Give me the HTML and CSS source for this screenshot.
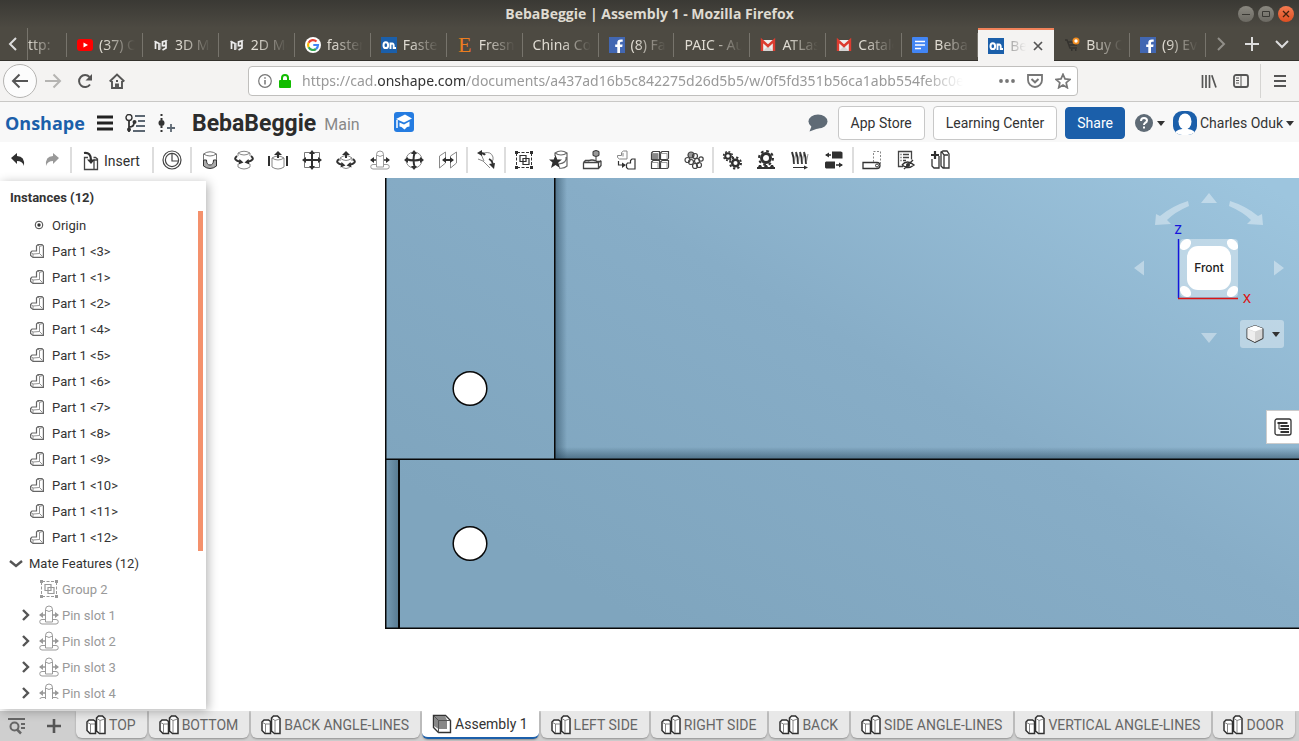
FILE: index.html
```html
<!DOCTYPE html>
<html lang="en">
<head>
<meta charset="utf-8">
<title>BebaBeggie | Assembly 1</title>
<link rel="stylesheet" href="styles.css">
</head>
<body>
<svg class="defs" aria-hidden="true">
  <symbol id="on" viewBox="0 0 16 16"><rect width="16" height="16" fill="#1b5faa"/><ellipse cx="4.800" cy="8.200" rx="2.300" ry="2.900" fill="none" stroke="#fff" stroke-width="2"/><path d="M9.500 12V5.500M9.500 8.200q0-1.700 1.600-1.700T12.700 8.500V11h2.300" fill="none" stroke="#fff" stroke-width="1.900"/></symbol>
  <symbol id="fb" viewBox="0 0 16 16"><rect width="16" height="16" fill="#4267b2"/><path d="M11 16V10h2.200l.4-2.500H11V6q0-1.200 1.300-1.200h1.400V2.600Q8.300 1.700 8.300 5.700v1.800H6.200V10h2.100v6z" fill="#fff"/></symbol>
  <symbol id="gm" viewBox="0 0 16 16"><path d="M1 3h14v11H1z" fill="#eee"/><path d="M3 14l5-5 5 5z" fill="#d4d4d4"/><path d="M2 14V3.500l6 5.500 6-5.500V14" fill="none" stroke="#dc3c30" stroke-width="2.400"/></symbol>
  <symbol id="am" viewBox="0 0 16 16"><path d="M2.500 12V4M3 5l3 1.500V13M9.500 9.500V5l3.500-1v7l-3.500 2M10 9l3-1" fill="none" stroke="#eee" stroke-width="1.700"/><path d="M1 4.500L3 4M7.700 6v6.500M14.500 3.500L13 4" stroke="#ccc" stroke-width=".8"/></symbol>
  <symbol id="part" viewBox="0 0 14 14"><path d="M6.500 7V2L8 .6h4l1.400 1.400v11.400H3L.6 11.500V8.400L2 7z" fill="#fff" stroke="#666" stroke-width="1.200"/><path d="M8 1l1.500 1.500V9.500L3 10v3M9.500 2.500L12.500 1.500M9.500 9.500l3 3M1 8.500L3 10" fill="none" stroke="#888" stroke-width=".9"/></symbol>
  <symbol id="group" viewBox="0 0 20 20"><path d="M3 2.500h14M3 17.500h14M2.500 3v14M17.500 3v14" stroke="currentColor" stroke-dasharray="3 1.500" fill="none"/><path d="M1 1h3v3H1zM16 1h3v3h-3zM1 16h3v3H1zM16 16h3v3h-3z" fill="currentColor"/><path d="M6 5.500h6v6H6zM9 8.500h6v6H9z" fill="none" stroke="currentColor" stroke-width="1.200"/></symbol>
  <symbol id="pin" viewBox="0 0 20 20"><path d="M6.500 17V4.500a3.500 3.500 0 0 1 7 0V17M6.500 5q3.500 3 7 0M6 14.500H3a2 2 0 0 0 0 4.500h14a2 2 0 0 0 0-4.500h-3M6.500 17h7" fill="none" stroke="#999"/><path d="M1 10h5M14 10h5" stroke="currentColor" stroke-width="1.500"/><path d="M0 10l4-3v6zM20 10l-4-3v6z" fill="currentColor"/></symbol>
  <symbol id="studio" viewBox="0 0 20 20"><path d="M1 7l2-2h4.500L9.500 6.500v12H4L1 15.500zM10.500 3l2-2h4L19 3.500v15h-5.500l-3-2.500z" fill="#fff" stroke="#303030" stroke-width="1.500"/><path d="M1.500 7.500L4.500 9v9M4.500 9H9M11 3.500L14 5.500V18M14 5.500L18.500 4" fill="none" stroke="#777" stroke-width=".9"/></symbol>
  <symbol id="chev" viewBox="0 0 10 14"><path d="M2 2l5 5-5 5" fill="none" stroke="currentColor" stroke-width="2.400"/></symbol>
</svg>

<div class="titlebar">
  <span class="wtitle">BebaBeggie | Assembly 1 - Mozilla Firefox</span>
  <div class="wbtns">
    <button aria-label="Minimize"><svg width="16" height="16"><path d="M4 8.500h8" stroke="#3a3934"/></svg></button>
    <button aria-label="Maximize"><svg width="16" height="16"><path d="M4.500 5.500h7v5h-7z" fill="none" stroke="#3a3934"/></svg></button>
    <button class="close" aria-label="Close"><svg width="16" height="16"><path d="M5 5l6 6M11 5l-6 6" stroke="#42220f" stroke-width="1.300"/></svg></button>
  </div>
</div>

<nav class="tabs" aria-label="Browser tabs">
  <button class="tabbtn left" aria-label="Scroll left"><svg width="10" height="16"><path d="M8 2L2 8l6 6" fill="none" stroke="#ddd" stroke-width="2"/></svg></button>
  <a href="#" class="tab partial"><span>ttp:</span></a>
  <a href="#" class="tab"><svg width="16" height="16"><rect y="2" width="16" height="12" rx="3" fill="#f00"/><path d="M6.500 5.500v5L11 8z" fill="#fff"/></svg><span>(37) Op</span></a>
  <a href="#" class="tab"><svg width="16" height="16"><use href="#am"/></svg><span>3D Mod</span></a>
  <a href="#" class="tab"><svg width="16" height="16"><use href="#am"/></svg><span>2D Mod</span></a>
  <a href="#" class="tab"><svg width="16" height="16" viewBox="0 0 16 16"><circle cx="8" cy="8" r="8" fill="#fff"/><g fill="none" stroke-width="2.200"><path d="M11.500 4.500A5 5 0 0 0 3.600 5.700" stroke="#ea4335"/><path d="M3.600 5.700a5 5 0 0 0 0 4.600" stroke="#fbbc05"/><path d="M3.600 10.300A5 5 0 0 0 11 12" stroke="#34a853"/><path d="M11 12a5 5 0 0 0 2-4H8.300" stroke="#4285f4"/></g></svg><span>fastener</span></a>
  <a href="#" class="tab"><svg width="16" height="16"><use href="#on"/></svg><span>Fastener</span></a>
  <a href="#" class="tab"><b class="etsy">E</b><span>Fresno</span></a>
  <a href="#" class="tab"><span>China Com</span></a>
  <a href="#" class="tab"><svg width="16" height="16"><use href="#fb"/></svg><span>(8) Face</span></a>
  <a href="#" class="tab"><span>PAIC - Aut</span></a>
  <a href="#" class="tab"><svg width="16" height="16"><use href="#gm"/></svg><span>ATLas</span></a>
  <a href="#" class="tab"><svg width="16" height="16"><use href="#gm"/></svg><span>Catalog</span></a>
  <a href="#" class="tab"><svg width="16" height="16"><rect width="16" height="16" rx="1" fill="#4285f4"/><path d="M3 4.500h10M3 8h10M3 11.500h6" stroke="#fff" stroke-width="1.700"/></svg><span>Beba B</span></a>
  <a href="#" class="tab active"><svg width="16" height="16"><use href="#on"/></svg><span>Beba</span><svg width="12" height="12"><path d="M2 2l8 8M10 2l-8 8" stroke="#555" stroke-width="1.700"/></svg></a>
  <a href="#" class="tab"><svg width="16" height="16"><path d="M1 3h2l3 8h7M4 5h6M5 8h8" stroke="#35332f" fill="none" stroke-width="1.500"/><path d="M7 13h1.500M11 13h1.500" stroke="#35332f" stroke-width="2"/><circle cx="12" cy="4" r="3.500" fill="#f28c1e"/><circle cx="12" cy="4" r="1.700" fill="#fff"/></svg><span>Buy On</span></a>
  <a href="#" class="tab"><svg width="16" height="16"><use href="#fb"/></svg><span>(9) Even</span></a>
  <div class="tabend">
    <button class="tabbtn" aria-label="Scroll right"><svg width="10" height="16"><path d="M2 2l6 6-6 6" fill="none" stroke="#918f89" stroke-width="2"/></svg></button>
    <button class="tabbtn" aria-label="New tab"><svg width="14" height="14"><path d="M7 0v14M0 7h14" stroke="#ddd" stroke-width="2"/></svg></button>
    <button class="tabbtn" aria-label="List tabs"><svg width="14" height="10"><path d="M1 2l6 6 6-6" fill="none" stroke="#ddd" stroke-width="2"/></svg></button>
  </div>
</nav>

<div class="navbar">
  <button class="back" aria-label="Back"><svg width="18" height="16"><path d="M17 8H2M8.500 1.500L2 8l6.500 6.500" fill="none" stroke="#555" stroke-width="2"/></svg></button>
  <button aria-label="Forward"><svg width="18" height="16"><path d="M1 8h15M9.500 1.500L16 8l-6.500 6.500" fill="none" stroke="#b5b4b2" stroke-width="2"/></svg></button>
  <button aria-label="Reload"><svg width="16" height="16"><path d="M13 11.500a6 6 0 1 1-.5-7.500" fill="none" stroke="#555" stroke-width="2"/><path d="M15 1v6.500H8.500z" fill="#555"/></svg></button>
  <button aria-label="Home"><svg width="16" height="16"><path d="M.7 8.500L8 1.500l7.300 7M3 8v7h10V8M7 15v-3.500h2V15" fill="none" stroke="#555" stroke-width="1.900"/><path d="M7 7h2v2H7z" fill="#555"/></svg></button>
  <div class="urlbar">
    <svg width="14" height="14"><circle cx="7" cy="7" r="6.300" fill="none" stroke="#777" stroke-width="1.200"/><path d="M7 6v4.500M7 3.300v1.500" stroke="#777" stroke-width="1.500"/></svg>
    <svg width="12" height="14"><path d="M3 7V4a3 3 0 0 1 6 0v3" fill="none" stroke="#12bc00" stroke-width="2"/><rect y="6" width="12" height="8" rx="1" fill="#12bc00"/></svg>
    <span class="url">https://cad.<b>onshape.com</b>/documents/a437ad16b5c842275d26d5b5/w/0f5fd351b56ca1abb554febc0e</span>
    <svg width="16" height="6"><circle cx="2" cy="3" r="1.900" fill="#777"/><circle cx="8" cy="3" r="1.900" fill="#777"/><circle cx="14" cy="3" r="1.900" fill="#777"/></svg>
    <svg width="16" height="14"><path d="M1 1h14v5a7 7 0 0 1-14 0z" fill="none" stroke="#777" stroke-width="1.800"/><path d="M4.500 5L8 8.300 11.500 5" fill="none" stroke="#777" stroke-width="2"/></svg>
    <svg width="16" height="16"><path d="M8 1.300l2 4.600 5 .5-3.800 3.300 1.100 5L8 12l-4.300 2.700 1.100-5L1 6.400l5-.5z" fill="none" stroke="#777" stroke-width="1.700"/></svg>
  </div>
  <div class="navend">
    <button aria-label="Library"><svg width="16" height="14"><path d="M1.500 1v13M5 1v13M8.500 1v13M10.800 1.300L15 13.600" stroke="#555" stroke-width="1.700"/></svg></button>
    <button aria-label="Sidebar"><svg width="16" height="14"><rect x="1" y="1" width="14" height="12" rx="2" fill="none" stroke="#555" stroke-width="1.800"/><path d="M8 1v12M3 4h3M3 6.500h3M3 9h3" stroke="#555"/></svg></button>
    <button class="burger" aria-label="Menu"><svg width="12" height="12"><path d="M0 1h12M0 6h12M0 11h12" stroke="#555" stroke-width="1.800"/></svg></button>
  </div>
</div>

<header class="apphead">
  <a href="#" class="logo">Onshape</a>
  <button aria-label="Menu"><svg width="16" height="16"><path d="M0 2h16M0 8h16M0 14h16" stroke="#222" stroke-width="3"/></svg></button>
  <button aria-label="Versions"><svg width="20" height="18"><circle cx="4" cy="3.500" r="3" fill="none" stroke="#333" stroke-width="1.400"/><path d="M4 7v11M4 13q5 0 5-4" fill="none" stroke="#333" stroke-width="1.800"/><circle cx="9.500" cy="8" r="2" fill="#333"/><circle cx="4" cy="15.500" r="2" fill="#333"/><path d="M10 2h10M13 7h7M11 12h9M8 17h12" stroke="#5d6873" stroke-width="1.800"/></svg></button>
  <button aria-label="Create version"><svg width="18" height="18"><path d="M4.500 0v18" stroke="#333" stroke-width="2" stroke-dasharray="2 2"/><circle cx="4.500" cy="9" r="3" fill="#333"/><path d="M14 10v8M10 14h8" stroke="#5d6873" stroke-width="1.800"/></svg></button>
  <h1>BebaBeggie</h1><span class="branch">Main</span>
  <button class="learn" aria-label="Education"><svg width="20" height="20"><rect width="20" height="20" rx="3" fill="#257ce1"/><path d="M2 7L11 2.500l7 4-8 4z" fill="#fff"/><path d="M5.500 10.500l4.500 2 5.500-3v5l-2.500.5-2.500 2.500-3-2.500-2-.5z" fill="#fff"/><path d="M3 8v8" stroke="#fff" stroke-width="1.500"/></svg></button>
  <div class="headend">
    <button aria-label="Comments"><svg width="20" height="18"><ellipse cx="10" cy="7.500" rx="9.500" ry="7" fill="#5f6b76"/><path d="M4 11L1.500 17.500 11 14z" fill="#5f6b76"/></svg></button>
    <button class="btn">App Store</button>
    <button class="btn">Learning Center</button>
    <button class="btn share">Share</button>
    <button class="help" aria-label="Help"><svg width="18" height="18"><circle cx="9" cy="9" r="9" fill="#5f6b76"/><path d="M6 7q0-3 3-3t3 2.500Q12 8 10 9 9 9.700 9 11" fill="none" stroke="#fff" stroke-width="2"/><path d="M8 12.500h2v2H8z" fill="#fff"/></svg><i class="caret"></i></button>
    <button class="user"><svg width="24" height="24"><defs><clipPath id="av"><rect width="24" height="24" rx="9"/></clipPath></defs><g clip-path="url(#av)"><rect width="24" height="24" fill="#1b5faa"/><ellipse cx="12" cy="10.500" rx="6.500" ry="8" fill="#fff"/><path d="M1 24q1-5 8-6h6q7 1 8 6z" fill="#fff"/></g></svg>Charles Oduk<i class="caret"></i></button>
  </div>
</header>

<div class="toolbar" role="toolbar">
  <button aria-label="Undo"><svg viewBox="0 0 20 20"><path d="M3 8l6-5v3q8 0 7 10-1.500-5-7-5v3z" fill="#303030"/></svg></button>
  <button aria-label="Redo"><svg viewBox="0 0 20 20"><path d="M17 8l-6-5v3Q3 6 4 16q1.500-5 7-5v3z" fill="#999"/></svg></button>
  <i></i>
  <button class="insert"><svg viewBox="0 0 20 20"><path d="M8 6.500H4.500v12h13V8l-2-1.500h-2M14 18V9h3" fill="none" stroke="#444" stroke-width="1.300"/><path d="M4 2q7-1 7 7" fill="none" stroke="#303030" stroke-width="2.200"/><path d="M7 8.500h8L11 13z" fill="#303030"/></svg>Insert</button>
  <i></i>
  <button aria-label="Mate"><svg viewBox="0 0 20 20"><g fill="none" stroke="#444" stroke-width="1.200"><circle cx="10" cy="10" r="9"/><circle cx="10" cy="10" r="6.600"/><path d="M10 3.500V11h6"/></g></svg></button>
  <i></i>
  <button aria-label="Fastened mate"><svg viewBox="0 0 20 20"><path d="M3.500 10v6q6.500 5 13 0v-6h-3q0 5-3.500 5t-3.500-5z" fill="#aaa" stroke="#333"/><path d="M3.500 10V4q6.500-4.500 13 0v6M3.500 4q6.500 4 13 0" fill="none" stroke="#777"/></svg></button>
  <button aria-label="Revolute mate"><svg viewBox="0 0 20 20"><path d="M4 6V3q6-3.500 12 0v3M4 3q6 4 12 0M4 14v3q6 4 12 0v-3" fill="none" stroke="#888"/><path d="M3 6q-5 4 4 6M17 6q5 4-4 6" fill="none" stroke="#303030" stroke-width="2"/><path d="M5.500 9l4 3.500-5 2zM14.500 9l-4 3.500 5 2z" fill="#303030"/></svg></button>
  <button aria-label="Slider mate"><svg viewBox="0 0 20 20"><path d="M4 8v9q6 4 12 0V8M4 8q6-4 12 0-6 4-12 0" fill="none" stroke="#888"/><path d="M1 6v10M19 6v10M10 3v5" stroke="#303030" stroke-width="2"/><path d="M6 5h8l-4-4z" fill="#303030"/></svg></button>
  <button aria-label="Planar mate"><svg viewBox="0 0 20 20"><path d="M2.500 2.500h15v15h-15z" fill="none" stroke="#777"/><path d="M10 3v14M3 10h14" stroke="#303030" stroke-width="2"/><path d="M7 4h6l-3-4zM7 16h6l-3 4zM4 7v6l-4-3zM16 7v6l4-3z" fill="#303030"/></svg></button>
  <button aria-label="Cylindrical mate"><svg viewBox="0 0 20 20"><path d="M4 8q6-5 12 0-6 5-12 0v3M16 8v3M5 16q5 5 10 0" fill="none" stroke="#888"/><path d="M3 9q-5 4 4 6M17 9q5 4-4 6M10 3v5" fill="none" stroke="#303030" stroke-width="2"/><path d="M6 5h8l-4-4zM5.500 12l4 3.500-5 2zM14.500 12l-4 3.500 5 2z" fill="#303030"/></svg></button>
  <button aria-label="Pin slot mate"><svg viewBox="0 0 20 20"><use href="#pin"/></svg></button>
  <button aria-label="Ball mate"><svg viewBox="0 0 20 20"><circle cx="10" cy="10" r="8" fill="none" stroke="#888"/><path d="M11 2q-3 7 0 16M2 9q8 3 16 0" fill="none" stroke="#303030" stroke-width="2"/><path d="M7 4h6l-3-4zM7 16h6l-3 4zM4 7v6l-4-3zM16 7v6l4-3z" fill="#303030"/></svg></button>
  <button aria-label="Parallel mate"><svg viewBox="0 0 20 20"><path d="M1.500 6l6-4v11l-6 5zM12.500 6l6-4v11l-6 5z" fill="none" stroke="#888"/><path d="M5 10h10" stroke="#303030" stroke-width="2"/><path d="M8 7v6l-4-3zM12 7v6l4-3z" fill="#303030"/></svg></button>
  <i></i>
  <button aria-label="Tangent mate"><svg viewBox="0 0 20 20"><path d="M2 9l5 2 7 7M5 4l3 7M8 3q7-2 9 4 1 4-2 5" fill="none" stroke="#888"/><path d="M4 3q4 0 5 2M13 9q4 2 4 7" fill="none" stroke="#303030" stroke-width="1.800"/><path d="M1 3l5-3v6zM13 14l6-1-1 6z" fill="#303030"/></svg></button>
  <i></i>
  <button aria-label="Group"><svg viewBox="0 0 20 20"><use href="#group"/></svg></button>
  <button aria-label="Mate connector"><svg viewBox="0 0 20 20"><path d="M7 6V3q6-4 12 0v13q-3 3-8 2M7 3q6 4 12 0M11 14q8-1 7-7" fill="none" stroke="#666" stroke-width="1.200"/><path d="M7.500 5l1.800 4.500H14l-3.700 3L12 18l-4.500-3L3 18l1.500-5.500L1 9.500h4.700z" fill="#303030"/></svg></button>
  <button aria-label="Snap mode"><svg viewBox="0 0 20 20"><path d="M1.500 12.500v6h15l2.500-3v-4h-5M1.500 12.500l2-2H7M1.500 12.500h15l2.500-2M16.500 12.500v6M6 11q4-2 8 0" fill="none" stroke="#444" stroke-width="1.300"/><path d="M11 1.500q3-2 6 0v4q-3 2-6 0zM14 7v4" fill="#999" stroke="#333"/></svg></button>
  <button aria-label="Replicate"><svg viewBox="0 0 20 20"><path d="M5.500 5.500V2.500l2-1.500H11v8H3.500l-2-1.500V5.500zM7 6.500V3" fill="none" stroke="#888"/><path d="M14.500 13v-2.500l1.500-1.500h3v10h-7l-1.500-1.500V14.500l1-1.500zM2.500 11v4h5" fill="none" stroke="#333" stroke-width="1.200"/><path d="M6 12.500l4 2.500-4 3z" fill="#303030"/></svg></button>
  <button aria-label="Linear pattern"><svg viewBox="0 0 20 20"><g fill="#fff" stroke="#444" stroke-width="1.200"><path d="M1.500 3L3 1.500h6.500v8H1.500zM10.500 3L12 1.500h6.500V8L17.500 9.500h-7zM1.500 12L3 10.500h6.500v8H1.500zM10.500 12l1.500-1.500h6.500V17l-1 1.500h-7z"/><path d="M1.500 3.500H8v6M10.500 3.500H17v6M1.500 12.500H8v6M10.500 12.500H17v6" fill="none" stroke="#888" stroke-width=".8"/></g><path d="M2 3.500h6V9H2z" fill="#888"/></svg></button>
  <button aria-label="Circular pattern"><svg viewBox="0 0 20 20"><g fill="none" stroke="#444" stroke-width="1.200"><circle cx="7" cy="5" r="3" fill="#999"/><circle cx="11" cy="6" r="2.500"/><circle cx="3.500" cy="10" r="2.500"/><circle cx="7" cy="12" r="2.500"/><circle cx="13" cy="11" r="2.500"/><circle cx="17" cy="9" r="2.200"/><circle cx="11" cy="16" r="2.500"/><circle cx="15" cy="15" r="2.500"/></g></svg></button>
  <i></i>
  <button aria-label="Gear relation"><svg viewBox="0 0 20 20"><g fill="none" stroke="#303030"><circle cx="6" cy="6" r="2.800" stroke-width="2"/><circle cx="6" cy="6" r="4.400" stroke-width="1.500" stroke-dasharray="1.800 1.650"/><circle cx="13.500" cy="13" r="3.300" stroke-width="2.500"/><circle cx="13.500" cy="13" r="5.500" stroke-width="2" stroke-dasharray="2.200 2.120"/></g></svg></button>
  <button aria-label="Rack and pinion relation"><svg viewBox="0 0 20 20"><g fill="none" stroke="#303030"><circle cx="10" cy="8" r="4.500" stroke-width="3"/><circle cx="10" cy="8" r="7" stroke-width="2" stroke-dasharray="2.750 2.748"/></g><path d="M1 19v-2h1l1-2h2l1 2h2l1-2h2l1 2h2l1-2h2l1 2h1v2z" fill="#303030"/></svg></button>
  <button aria-label="Screw relation"><svg viewBox="0 0 20 20"><path d="M2 2q2 5 2 12M6 2q2 5 2 12M10 2q2 5 2 12M14 2q2 5 2 12" fill="none" stroke="#303030" stroke-width="2"/><path d="M4 14L6 2M8 14l2-12M12 14l2-12M16 14l2-10" stroke="#777" stroke-width=".8"/><path d="M3 17.500h12" stroke="#303030"/><path d="M14 15.500l4 2-4 2z" fill="#303030"/></svg></button>
  <button aria-label="Linear relation"><svg viewBox="0 0 20 20"><path d="M8 1.500h9l1.500 1v6H8zM2 11.500h9v7H2l-1-1v-5z" fill="#303030"/><path d="M2 5h5M12 15h6" stroke="#303030" stroke-width="1.500"/><path d="M5 2.500v5L1 5zM15 12.500v5l4-2.500z" fill="#303030"/></svg></button>
  <i></i>
  <button aria-label="Animate"><svg viewBox="0 0 20 20"><path d="M1 12.500h14a3 3 0 0 1 0 6H1z" fill="none" stroke="#333" stroke-width="1.300"/><circle cx="15" cy="15.500" r="1.500" fill="none" stroke="#333"/><path d="M11.500 12V1.500h7V15" fill="none" stroke="#888" stroke-dasharray="2 1.500"/></svg></button>
  <button aria-label="Bill of materials"><svg viewBox="0 0 20 20"><path d="M7 16.500H2.500v-15h13v8M4.500 4.500h1M7 4.500h6M4.500 7.500h1M7 7.500h6M4.500 10.500h1M7 10.500h3" fill="none" stroke="#444" stroke-width="1.300"/><path d="M6 15q5-6 12 0-6 5-12 0M8 19l9-9" fill="none" stroke="#333" stroke-width="1.400"/><circle cx="12" cy="15" r="2" fill="#333"/></svg></button>
  <button aria-label="Create part in context"><svg viewBox="0 0 20 20"><path d="M2 9v7l2 2h5V9M9 9V6M11 2l2-1h4l2 3v14h-6l-2-2zM12 2l2 3h4M14 5v13" fill="none" stroke="#333" stroke-width="1.300"/><path d="M5 1v8M1 5h8" stroke="#303030" stroke-width="2.200"/></svg></button>
</div>

<main class="viewer">
  <svg class="canvas" aria-label="Assembly model">
    <defs>
      <linearGradient id="face" gradientUnits="userSpaceOnUse" x1="700" y1="480" x2="1050" y2="-120"><stop offset="0" stop-color="#7fa5be"/><stop offset=".5" stop-color="#87adc7"/><stop offset="1" stop-color="#9dc5de"/></linearGradient>
      <linearGradient id="shx"><stop offset="0" stop-color="#26455a" stop-opacity=".55"/><stop offset="1" stop-color="#26455a" stop-opacity="0"/></linearGradient>
      <linearGradient id="shy" x1="0" y1="1" x2="0" y2="0"><stop offset="0" stop-color="#26455a" stop-opacity=".55"/><stop offset="1" stop-color="#26455a" stop-opacity="0"/></linearGradient>
      <linearGradient id="shl" x1="1" x2="0"><stop offset="0" stop-color="#26455a" stop-opacity=".45"/><stop offset="1" stop-color="#26455a" stop-opacity=".1"/></linearGradient>
    </defs>
    <rect x="386" width="100%" height="450" fill="url(#face)"/>
    <rect x="555" width="12" height="281" fill="url(#shx)"/>
    <rect x="555" y="269" width="100%" height="12" fill="url(#shy)"/>
    <rect x="386" y="282" width="13" height="168" fill="url(#shl)"/>
    <g fill="#080808">
      <rect x="385" width="1.500" height="451"/><rect x="554" width="1.500" height="282"/>
      <rect x="385" y="280.500" width="100%" height="1.500"/><rect x="398" y="281" width="2" height="170"/>
      <rect x="385" y="449.500" width="100%" height="1.500"/>
    </g>
    <g fill="#fff" stroke="#080808" stroke-width="1.500"><circle cx="470" cy="210.500" r="16.800"/><circle cx="470" cy="365.500" r="16.800"/></g>
  </svg>

  <aside class="panel">
    <h2>Instances (12)</h2>
    <ul>
      <li><svg class="origin" width="10" height="10"><circle cx="5" cy="5" r="3.800" fill="none" stroke="#444"/><circle cx="5" cy="5" r="1.700" fill="#333"/></svg>Origin</li>
      <li><svg class="pt"><use href="#part"/></svg>Part 1 &lt;3&gt;</li>
      <li><svg class="pt"><use href="#part"/></svg>Part 1 &lt;1&gt;</li>
      <li><svg class="pt"><use href="#part"/></svg>Part 1 &lt;2&gt;</li>
      <li><svg class="pt"><use href="#part"/></svg>Part 1 &lt;4&gt;</li>
      <li><svg class="pt"><use href="#part"/></svg>Part 1 &lt;5&gt;</li>
      <li><svg class="pt"><use href="#part"/></svg>Part 1 &lt;6&gt;</li>
      <li><svg class="pt"><use href="#part"/></svg>Part 1 &lt;7&gt;</li>
      <li><svg class="pt"><use href="#part"/></svg>Part 1 &lt;8&gt;</li>
      <li><svg class="pt"><use href="#part"/></svg>Part 1 &lt;9&gt;</li>
      <li><svg class="pt"><use href="#part"/></svg>Part 1 &lt;10&gt;</li>
      <li><svg class="pt"><use href="#part"/></svg>Part 1 &lt;11&gt;</li>
      <li><svg class="pt"><use href="#part"/></svg>Part 1 &lt;12&gt;</li>
      <li class="mates"><svg width="14" height="10"><path d="M1 2l6 5 6-5" fill="none" stroke="#555" stroke-width="2.400"/></svg>Mate Features (12)</li>
      <li class="mate group"><svg class="mi"><use href="#group"/></svg>Group 2</li>
      <li class="mate"><svg class="ch"><use href="#chev"/></svg><svg class="mi"><use href="#pin"/></svg>Pin slot 1</li>
      <li class="mate"><svg class="ch"><use href="#chev"/></svg><svg class="mi"><use href="#pin"/></svg>Pin slot 2</li>
      <li class="mate"><svg class="ch"><use href="#chev"/></svg><svg class="mi"><use href="#pin"/></svg>Pin slot 3</li>
      <li class="mate"><svg class="ch"><use href="#chev"/></svg><svg class="mi"><use href="#pin"/></svg>Pin slot 4</li>
    </ul>
    <div class="scroll"></div>
  </aside>

  <svg class="cube" width="179" height="180" viewBox="0 0 179 180">
    <g fill="#fff" fill-opacity=".38">
      <path d="M89 15l8 10H81zM89 165l8-10H81zM14 90l10-7.500v15zM164 90l-10-7.500v15z"/>
      <path d="M68 23l1 5q-14 6-22 14l4 4-16 1 1-11 4 2q12-10 28-15zM110 23l-1 5q14 6 22 14l-4 4 16 1-1-11-4 2q-12-10-28-15z"/>
      <rect x="60" y="61" width="58" height="58" rx="4"/>
    </g>
    <g fill="#fff"><rect x="67" y="68" width="44" height="44" rx="11"/>
      <ellipse cx="65.500" cy="66.500" rx="6.500" ry="4.500" transform="rotate(-45 65.500 66.500)"/><ellipse cx="112.500" cy="66.500" rx="6.500" ry="4.500" transform="rotate(45 112.500 66.500)"/>
      <ellipse cx="65.500" cy="113.500" rx="6.500" ry="4.500" transform="rotate(45 65.500 113.500)"/><ellipse cx="112.500" cy="113.500" rx="6.500" ry="4.500" transform="rotate(-45 112.500 113.500)"/></g>
    <path d="M58.500 61v59" stroke="#1414dc" stroke-width="1.400"/><path d="M58 120.500h60" stroke="#dc1414" stroke-width="1.400"/>
    <text x="89" y="94" text-anchor="middle" fill="#222">Front</text>
    <text x="58" y="56" text-anchor="middle" fill="#1414dc">Z</text>
    <text x="127" y="125" text-anchor="middle" fill="#dc1414">X</text>
  </svg>
  <button class="viewbtn" aria-label="View options"><svg width="20" height="20"><path d="M2 4.500l8-3 8 3v10l-8 4-8-4z" fill="#d5d5d5" stroke="#333"/><path d="M2 4.500l8-3 8 3-8 3z" fill="#fff"/><path d="M2.500 5l7.500 3v10l-7.500-4z" fill="#eee"/></svg><i class="caret"></i></button>
  <button class="config" aria-label="Configuration"><svg width="18" height="18"><rect x="1" y="1" width="16" height="16" rx="2" fill="none" stroke="#333" stroke-width="1.300"/><path d="M3.500 5h10M6.500 8H15M6.500 11H15M6.500 14H15" stroke="#333" stroke-width="2"/><path d="M5 5v6h2" fill="none" stroke="#333"/></svg></button>
</main>

<nav class="docs" aria-label="Document tabs">
  <button aria-label="Search tabs"><svg width="18" height="18"><path d="M0 2h17M13 7h4M13 11h4" stroke="#666" stroke-width="1.800"/><circle cx="6.500" cy="9.500" r="4" fill="none" stroke="#666" stroke-width="2"/><path d="M9 12.500l4 4" stroke="#666" stroke-width="2.500"/></svg></button>
  <button aria-label="Add tab"><svg width="16" height="16"><path d="M8 1v14M1 8h14" stroke="#555" stroke-width="2.600"/></svg></button>
  <a href="#"><svg><use href="#studio"/></svg>TOP</a>
  <a href="#"><svg><use href="#studio"/></svg>BOTTOM</a>
  <a href="#"><svg><use href="#studio"/></svg>BACK ANGLE-LINES</a>
  <a href="#" class="cur"><svg viewBox="0 0 20 20"><path d="M1.500 1.500h12l5 5v12h-12l-5-5z" fill="#fff" stroke="#333" stroke-width="1.400"/><path d="M2 2h11l2 4v9H6.500L2 12z" fill="#888"/><path d="M2 2l4.500 4.500h12M6.500 6.500v12" fill="none" stroke="#555"/></svg>Assembly 1</a>
  <a href="#"><svg><use href="#studio"/></svg>LEFT SIDE</a>
  <a href="#"><svg><use href="#studio"/></svg>RIGHT SIDE</a>
  <a href="#"><svg><use href="#studio"/></svg>BACK</a>
  <a href="#"><svg><use href="#studio"/></svg>SIDE ANGLE-LINES</a>
  <a href="#"><svg><use href="#studio"/></svg>VERTICAL ANGLE-LINES</a>
  <a href="#"><svg><use href="#studio"/></svg>DOOR</a>
</nav>
</body>
</html>
```
FILE: styles.css
```css
* { box-sizing: border-box; }
body {
  margin: 0;
  height: 100vh;
  display: flex;
  flex-direction: column;
  overflow: hidden;
  font: 14px/20px Roboto, "Liberation Sans", sans-serif;
  color: #333;
  background: #fff;
}
a { color: inherit; text-decoration: none; }
button {
  margin: 0;
  padding: 0;
  border: 0;
  background: none;
  font: inherit;
  color: inherit;
  display: flex;
  align-items: center;
  justify-content: center;
}
svg { display: block; flex: none; }
.defs { position: absolute; width: 0; height: 0; }
.caret {
  border: 4px solid transparent;
  border-top: 5px solid #333;
  border-bottom: 0;
}

/* Window frame */
.titlebar {
  flex: none;
  height: 28px;
  display: grid;
  grid-template-columns: 1fr auto 1fr;
  align-items: center;
  background: linear-gradient(#3a3934, #4d4a42);
  font: bold 14px/20px "Open Sans", sans-serif;
  color: #dfdbd2;
}
.wtitle { grid-column: 2; }
.wbtns { display: flex; justify-content: flex-end; gap: 4px; padding-right: 5px; }
.wbtns button { width: 16px; height: 16px; border-radius: 50%; background: linear-gradient(#8a8880, #6b6962); }
.wbtns .close { background: linear-gradient(#f47b51, #dd4f22); }

.tabs {
  flex: none;
  height: 33px;
  display: flex;
  background: #4d4a42;
  border-bottom: 1px solid #33312c;
  font: 14px/20px "Noto Sans", sans-serif;
  color: #dfdbd2;
}
.tab {
  flex: 1 1 76px;
  min-width: 0;
  display: flex;
  align-items: center;
  gap: 6px;
  padding: 1px 8px 0 10px;
  background: linear-gradient(#77746c, #77746c) right 5px / 1px 24px no-repeat;
}
.tab span {
  flex: 1;
  min-width: 0;
  overflow: hidden;
  white-space: nowrap;
  -webkit-mask-image: linear-gradient(to left, transparent, #000 30px);
  mask-image: linear-gradient(to left, transparent, #000 30px);
}
.tab.partial { flex: 0 0 39px; padding: 1px 9px 0 0; }
.tab.active { background: #f4f3f2; border-top: 2px solid #f0825a; padding: 0 10px; color: #777; height: 33px; }
.tab.active span { -webkit-mask-image: linear-gradient(to left, transparent, #000 24px); mask-image: linear-gradient(to left, transparent, #000 24px); }
.etsy { width: 16px; text-align: center; font: 22px/20px "Liberation Serif", serif; color: #eb7d20; }
.tabbtn.left { width: 28px; border-right: 1px solid #77746c; }
.tabend { display: flex; flex: none; width: 93px; padding-right: 2px; }
.tabend .tabbtn { flex: 1; }

/* Navigation bar */
.navbar {
  flex: none;
  height: 41px;
  display: flex;
  align-items: center;
  padding-left: 3px;
  background: #f4f3f2;
  border-bottom: 1px solid #c9c8c6;
}
.navbar > button { width: 32px; height: 32px; }
.navbar > .back { width: 34px; height: 34px; border: 1px solid #b5b4b2; border-radius: 50%; background: #fcfcfc; }
.urlbar {
  flex: 1 1 830px;
  min-width: 0;
  height: 30px;
  margin-left: 115px;
  padding: 0 6px 0 9px;
  display: flex;
  align-items: center;
  gap: 7px;
  background: #fff;
  border: 1px solid #c0bfbd;
  border-radius: 4px;
}
.url {
  flex: 1;
  min-width: 0;
  margin: 0 29px 0 4px;
  overflow: hidden;
  white-space: nowrap;
  font: 14px/20px "Noto Sans", sans-serif;
  color: #999;
  -webkit-mask-image: linear-gradient(to left, transparent, #000 40px);
  mask-image: linear-gradient(to left, transparent, #000 40px);
}
.url b { font-weight: 400; color: #333; }
.urlbar svg:nth-last-child(-n+2) { margin-left: 5px; }
.navend { flex: none; width: 221px; display: flex; justify-content: flex-end; }
.navend button { width: 32px; height: 34px; }
.navend .burger { width: 39px; margin-left: 3px; border-left: 1px solid #d5d4d2; }

/* Document header */
.apphead { flex: none; height: 40px; display: flex; align-items: center; padding: 2px 5px 0; background: #f8f8f8; }
.logo { flex: none; width: 92px; font: bold 18px/24px "Open Sans", "Noto Sans", sans-serif; color: #1b5faa; }
.apphead > button { margin-right: 12px; }
h1 { margin: 2px 0 0 5px; font: bold 23px/28px Roboto, sans-serif; color: #2c2c2c; }
.branch { margin: 4px 0 0 8px; font-size: 16px; color: #888; }
.apphead > .learn { margin: 0 0 3px 34px; }
.headend { margin-left: auto; display: flex; align-items: center; }
.btn { height: 34px; margin-left: 8px; padding: 0 12px; border: 1px solid #c8c8c8; border-radius: 4px; background: #fff; }
.headend button:first-child { margin-right: 2px; }
.btn.share { height: 32px; padding: 0 11px; border-color: #1b5faa; background: #1b5faa; color: #fff; }
.help { margin-left: 10px; gap: 4px; }
.user { margin-left: 8px; gap: 3px; }

.toolbar { flex: none; height: 36px; display: flex; align-items: center; padding-left: 1px; background: #fff; }
.toolbar button { width: 34px; height: 30px; flex: none; color: #303030; }
.toolbar svg { width: 20px; height: 20px; }
.toolbar .insert { width: 78px; gap: 4px; padding: 2px 4px 0 0; }
.toolbar i { width: 2px; height: 26px; margin: 0 1px; background: #ddd; flex: none; }

/* Viewer */
.viewer { flex: 1; min-height: 0; position: relative; display: flex; background: #fff; }
.canvas { position: absolute; inset: 0; width: 100%; height: 100%; }
.panel {
  position: relative;
  width: 206px;
  margin: 3px 0 2px;
  padding-bottom: 10px;
  display: flex;
  flex-direction: column;
  background: #fff;
  box-shadow: 2px 2px 10px rgba(0, 0, 0, .3);
  font-size: 13px;
}
.panel h2 { flex: none; margin: 0; padding: 7px 10px 4px; font: bold 13px/20px Roboto, sans-serif; }
.panel ul { flex: 1; min-height: 0; overflow: hidden; margin: 0; padding: 0; list-style: none; }
.panel li { height: 26px; padding: 1px 0 0 30px; display: flex; align-items: center; }
.origin { margin: 0 8px 2px 4px; }
.pt { width: 14px; height: 14px; margin: 0 8px 2px 0; }
.panel .mates { padding-left: 9px; gap: 6px; }
.panel .mate { padding-left: 21px; color: #999; }
.panel .group { padding-left: 39px; }
.ch { width: 10px; height: 14px; margin: 0 8px 2px 0; color: #555; }
.mi { width: 20px; height: 20px; margin: 0 3px 2px 0; }
.scroll { position: absolute; right: 3px; top: 30px; width: 5px; height: 340px; background: #f4916c; }
.cube { position: absolute; right: 0; top: 0; font: 500 12px Inter, Roboto, sans-serif; }
.viewbtn {
  position: absolute;
  right: 15px;
  top: 142px;
  width: 44px;
  height: 28px;
  gap: 7px;
  border-radius: 3px;
  background: rgba(255, 255, 255, .38);
}
.config { position: absolute; right: 0; top: 232px; width: 33px; height: 34px; background: #fff; border: 1px solid #ccc; border-right: 0; }

/* Document tabs */
.docs { flex: none; height: 30px; display: flex; align-items: flex-start; background: #cfcfcf; overflow: hidden; color: #666; }
.docs button { flex: none; width: 34px; height: 29px; }
.docs button + button { width: 40px; margin-right: 2px; }
.docs a {
  flex: none;
  height: 27px;
  margin-right: 2px;
  padding: 0 11px 0 10px;
  display: flex;
  align-items: center;
  gap: 3px;
  background: #e8e8e8;
  border-radius: 0 0 6px 6px;
  box-shadow: 0 1px 2px rgba(0, 0, 0, .3);
}
.docs a svg { width: 20px; height: 20px; }
.docs .cur { height: 28px; background: #fff; color: #333; border-bottom: 2px solid #1b5faa; }
```
